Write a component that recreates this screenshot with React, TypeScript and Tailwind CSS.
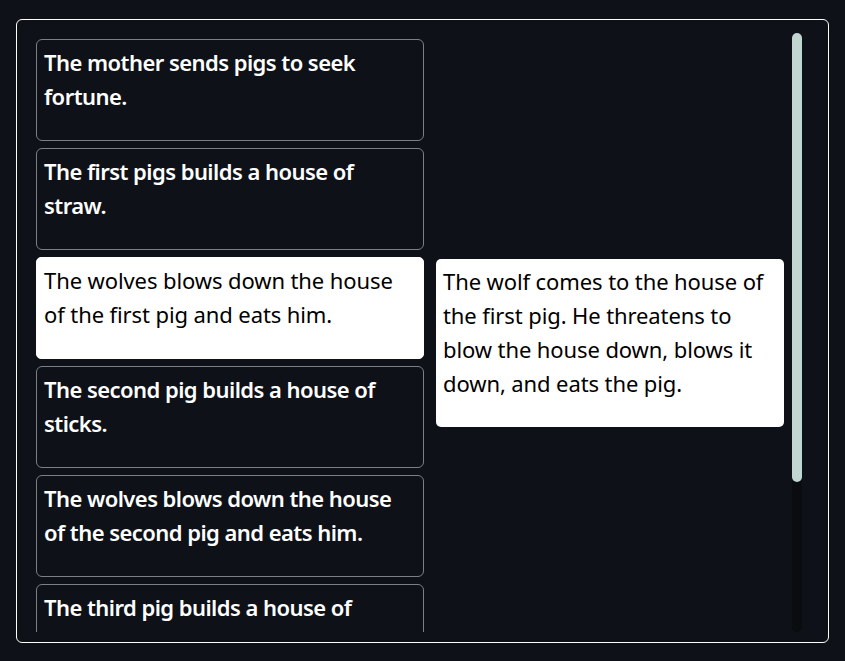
import React from "react";

const leftItems = [
  { text: "The mother sends pigs to seek fortune.", active: false },
  { text: "The first pigs builds a house of straw.", active: false },
  { text: "The wolves blows down the house of the first pig and eats him.", active: true },
  { text: "The second pig builds a house of sticks.", active: false },
  { text: "The wolves blows down the house of the second pig and eats him.", active: false },
  { text: "The third pig builds a house of bricks.", active: false },
  { text: "The wolves fails to blow down the house of the third pig.", active: false },
];

export default function App() {
  return (
    <div
      className="min-h-[661px] w-full bg-[#0e1117] pl-[16px] pr-[16px] pt-[19px] pb-[18px]"
      style={{ fontFamily: '"Noto Sans", "Open Sans", sans-serif' }}
    >
      <div className="flex h-[624px] rounded-[6px] border border-white pl-[13px] pr-[26px] pt-[13px] pb-[10px]">
        <div className="flex-1 overflow-hidden">
          <div className="flex items-start gap-[12px] pl-[6px] pt-[6px]">
            <div className="flex w-[388px] shrink-0 flex-col gap-[7px]">
              {leftItems.map((it, i) => (
                <div
                  key={i}
                  className={
                    it.active
                      ? "h-[102px] rounded-[5px] border border-white bg-white px-[7px] pt-[5px] text-[22px] leading-[34px] tracking-[-0.1px] text-black"
                      : "h-[102px] rounded-[6px] border border-[#7d7f84] px-[7px] pt-[5px] text-[22px] font-semibold leading-[34px] tracking-[-0.55px] text-white"
                  }
                >
                  {it.text}
                </div>
              ))}
            </div>
            <div className="mt-[220px] h-[168px] w-[348px] shrink-0 rounded-[5px] bg-white px-[7px] pt-[5px] text-[22px] leading-[34px] tracking-[-0.1px] text-black">
              The wolf comes to the house of the first pig. He threatens to blow the house down, blows it down, and eats the pig.
            </div>
          </div>
        </div>
        <div className="ml-[8px] flex w-[10px] shrink-0 flex-col rounded-full bg-[#0a0c10]">
          <div className="h-[449px] w-full rounded-full bg-[#c1d6d1]" />
        </div>
      </div>
    </div>
  );
}
